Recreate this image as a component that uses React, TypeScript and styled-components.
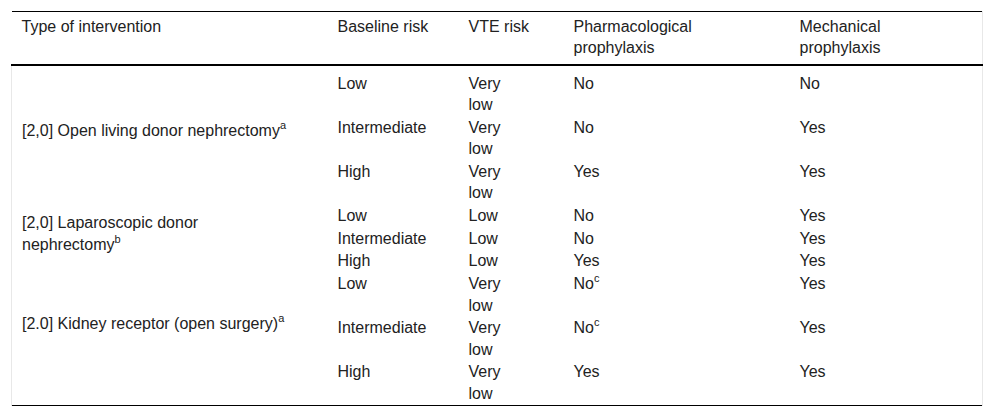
import React from 'react';
import styled, { createGlobalStyle } from 'styled-components';

const GlobalStyle = createGlobalStyle`
    body {
        margin: 0;
        background: #ffffff;
        font-family: "Liberation Sans", Arial, sans-serif;
        color: #222;
    }
`

type Row = {
    baseline: string;
    vte: string;
    pharma: string;
    pharmaNote?: string;
    mech: string;
}

type Group = {
    label: string;
    note: string;
    wrap?: number;
    lift: number;
    rows: Row[];
}

const groups: Group[] = [
    {
        label: '[2,0] Open living donor nephrectomy',
        note: 'a',
        lift: 16,
        rows: [
            { baseline: 'Low', vte: 'Very low', pharma: 'No', mech: 'No' },
            { baseline: 'Intermediate', vte: 'Very low', pharma: 'No', mech: 'Yes' },
            { baseline: 'High', vte: 'Very low', pharma: 'Yes', mech: 'Yes' },
        ],
    },
    {
        label: '[2,0] Laparoscopic donor nephrectomy',
        note: 'b',
        wrap: 200,
        lift: 10,
        rows: [
            { baseline: 'Low', vte: 'Low', pharma: 'No', mech: 'Yes' },
            { baseline: 'Intermediate', vte: 'Low', pharma: 'No', mech: 'Yes' },
            { baseline: 'High', vte: 'Low', pharma: 'Yes', mech: 'Yes' },
        ],
    },
    {
        label: '[2.0] Kidney receptor (open surgery)',
        note: 'a',
        lift: 30,
        rows: [
            { baseline: 'Low', vte: 'Very low', pharma: 'No', pharmaNote: 'c', mech: 'Yes' },
            { baseline: 'Intermediate', vte: 'Very low', pharma: 'No', pharmaNote: 'c', mech: 'Yes' },
            { baseline: 'High', vte: 'Very low', pharma: 'Yes', mech: 'Yes' },
        ],
    },
]

const App = () => {
    return (
        <>
            <GlobalStyle />
            <Wrapper>
                <Table>
                    <colgroup>
                        <col style={{ width: 316 }} />
                        <col style={{ width: 131 }} />
                        <col style={{ width: 105 }} />
                        <col style={{ width: 226 }} />
                        <col style={{ width: 193 }} />
                    </colgroup>
                    <thead>
                        <tr>
                            <HeadCell>Type of intervention</HeadCell>
                            <HeadCell>Baseline risk</HeadCell>
                            <HeadCell><HeadLabel $nowrap>VTE risk</HeadLabel></HeadCell>
                            <HeadCell><HeadLabel $max={150}>Pharmacological prophylaxis</HeadLabel></HeadCell>
                            <HeadCell $last><HeadLabel $max={120}>Mechanical prophylaxis</HeadLabel></HeadCell>
                        </tr>
                    </thead>
                    <tbody>
                        {groups.map((g, gi) =>
                            g.rows.map((r, ri) => (
                                <BodyRow key={`${gi}-${ri}`} $first={gi === 0 && ri === 0}>
                                    {ri === 0 && (
                                        <GroupCell rowSpan={g.rows.length} $lift={g.lift}>
                                            <GroupLabel $max={g.wrap}>
                                                {g.label}<Sup>{g.note}</Sup>
                                            </GroupLabel>
                                        </GroupCell>
                                    )}
                                    <Cell>{r.baseline}</Cell>
                                    <Cell><Narrow>{r.vte}</Narrow></Cell>
                                    <Cell>
                                        {r.pharma}
                                        {r.pharmaNote && <Sup>{r.pharmaNote}</Sup>}
                                    </Cell>
                                    <Cell $last>{r.mech}</Cell>
                                </BodyRow>
                            ))
                        )}
                    </tbody>
                </Table>
            </Wrapper>
        </>
    )
}

const Wrapper = styled.div`
    padding: 11px 0 0 11px;
    width: 971px;
`

const Table = styled.table`
    width: 971px;
    table-layout: fixed;
    border-collapse: collapse;
    font-size: 16px;
    line-height: 21.3px;
    color: #222;
    border-top: 1px solid #000;
    border-bottom: 1px solid #000;
`

const HeadCell = styled.th<{ $last?: boolean }>`
    text-align: left;
    font-weight: normal;
    vertical-align: top;
    padding: 4px 10px 5px 10px;
    border-bottom: 2px solid #000;
    border-right: ${p => (p.$last ? '1px solid #e8e8e8' : 'none')};
`

const HeadLabel = styled.span<{ $max?: number; $nowrap?: boolean }>`
    display: block;
    max-width: ${p => (p.$max ? `${p.$max}px` : 'none')};
    white-space: ${p => (p.$nowrap ? 'nowrap' : 'normal')};
`

const BodyRow = styled.tr<{ $first?: boolean }>`
    td {
        padding-top: ${p => (p.$first ? '7px' : '1px')};
    }
`

const Cell = styled.td<{ $last?: boolean }>`
    vertical-align: top;
    padding: 1px 10px 0.5px 10px;
    border-right: ${p => (p.$last ? '1px solid #e8e8e8' : 'none')};
`

const GroupCell = styled.td<{ $lift: number }>`
    vertical-align: middle;
    padding: 0 10px ${p => p.$lift}px 10px;
    border-left: 1px solid #e8e8e8;
`

const GroupLabel = styled.div<{ $max?: number }>`
    max-width: ${p => (p.$max ? `${p.$max}px` : 'none')};
`

const Narrow = styled.span`
    display: block;
    max-width: 50px;
`

const Sup = styled.sup`
    font-size: 11px;
    line-height: 0;
    vertical-align: 7px;
`

export default App;
